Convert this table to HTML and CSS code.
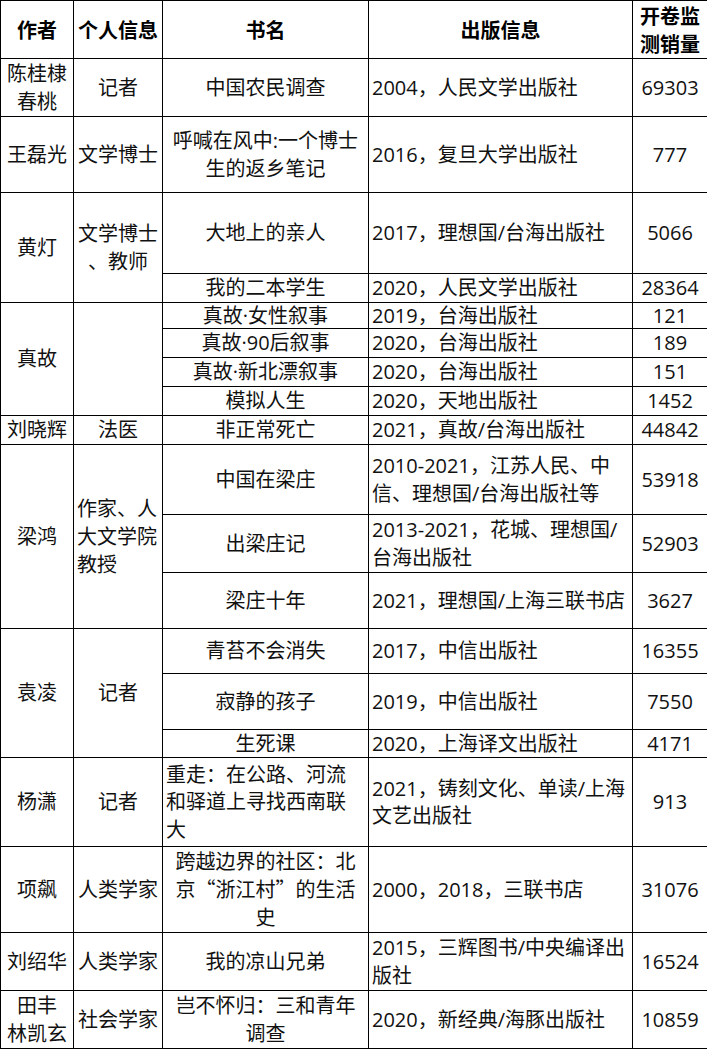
FILE: index.html
```html
<!DOCTYPE html>
<html lang="zh-CN">
<head>
<meta charset="utf-8">
<title>非虚构作品销量</title>
<link rel="stylesheet" href="styles.css">
</head>
<body>
<table class="books">
  <colgroup>
    <col class="c-author">
    <col class="c-info">
    <col class="c-title">
    <col class="c-pub">
    <col class="c-sales">
  </colgroup>
  <thead>
    <tr class="r58">
      <th>作者</th>
      <th>个人信息</th>
      <th>书名</th>
      <th>出版信息</th>
      <th>开卷监<br>测销量</th>
    </tr>
  </thead>
  <tbody>
    <tr class="r58">
      <td>陈桂棣<br>春桃</td>
      <td>记者</td>
      <td>中国农民调查</td>
      <td class="pub">2004，人民文学出版社</td>
      <td>69303</td>
    </tr>
    <tr class="r76">
      <td>王磊光</td>
      <td>文学博士</td>
      <td>呼喊在风中:一个博士<br>生的返乡笔记</td>
      <td class="pub">2016，复旦大学出版社</td>
      <td>777</td>
    </tr>
    <tr class="r81">
      <td rowspan="2">黄灯</td>
      <td rowspan="2">文学博士<br>、教师</td>
      <td>大地上的亲人</td>
      <td class="pub">2017，理想国/台海出版社</td>
      <td>5066</td>
    </tr>
    <tr class="r29">
      <td>我的二本学生</td>
      <td class="pub">2020，人民文学出版社</td>
      <td>28364</td>
    </tr>
    <tr class="r26">
      <td rowspan="4">真故</td>
      <td rowspan="4"></td>
      <td>真故·女性叙事</td>
      <td class="pub">2019，台海出版社</td>
      <td>121</td>
    </tr>
    <tr class="r29">
      <td>真故·90后叙事</td>
      <td class="pub">2020，台海出版社</td>
      <td>189</td>
    </tr>
    <tr class="r29">
      <td>真故·新北漂叙事</td>
      <td class="pub">2020，台海出版社</td>
      <td>151</td>
    </tr>
    <tr class="r29">
      <td>模拟人生</td>
      <td class="pub">2020，天地出版社</td>
      <td>1452</td>
    </tr>
    <tr class="r29">
      <td>刘晓辉</td>
      <td>法医</td>
      <td>非正常死亡</td>
      <td class="pub">2021，真故/台海出版社</td>
      <td>44842</td>
    </tr>
    <tr class="r70">
      <td rowspan="3">梁鸿</td>
      <td rowspan="3" class="left">作家、人<br>大文学院<br>教授</td>
      <td>中国在梁庄</td>
      <td class="pub">2010-2021，江苏人民、中<br>信、理想国/台海出版社等</td>
      <td>53918</td>
    </tr>
    <tr class="r58">
      <td>出梁庄记</td>
      <td class="pub">2013-2021，花城、理想国/<br>台海出版社</td>
      <td>52903</td>
    </tr>
    <tr class="r56">
      <td>梁庄十年</td>
      <td class="pub">2021，理想国/上海三联书店</td>
      <td>3627</td>
    </tr>
    <tr class="r45">
      <td rowspan="3">袁凌</td>
      <td rowspan="3">记者</td>
      <td>青苔不会消失</td>
      <td class="pub">2017，中信出版社</td>
      <td>16355</td>
    </tr>
    <tr class="r56">
      <td>寂静的孩子</td>
      <td class="pub">2019，中信出版社</td>
      <td>7550</td>
    </tr>
    <tr class="r28">
      <td>生死课</td>
      <td class="pub">2020，上海译文出版社</td>
      <td>4171</td>
    </tr>
    <tr class="r89">
      <td>杨潇</td>
      <td>记者</td>
      <td class="left">重走：在公路、河流<br>和驿道上寻找西南联<br>大</td>
      <td class="pub">2021，铸刻文化、单读/上海<br>文艺出版社</td>
      <td>913</td>
    </tr>
    <tr class="r86">
      <td>项飙</td>
      <td>人类学家</td>
      <td>跨越边界的社区：北<br>京<span class="cjk">“</span>浙江村<span class="cjk">”</span>的生活<br>史</td>
      <td class="pub">2000，2018，三联书店</td>
      <td>31076</td>
    </tr>
    <tr class="r58">
      <td>刘绍华</td>
      <td>人类学家</td>
      <td>我的凉山兄弟</td>
      <td class="pub">2015，三辉图书/中央编译出<br>版社</td>
      <td>16524</td>
    </tr>
    <tr class="r58">
      <td>田丰<br>林凯玄</td>
      <td>社会学家</td>
      <td>岂不怀归：三和青年<br>调查</td>
      <td class="pub">2020，新经典/海豚出版社</td>
      <td>10859</td>
    </tr>
  </tbody>
</table>
</body>
</html>
```
FILE: styles.css
```css
html, body {
  margin: 0;
  padding: 0;
  background: #ffffff;
}

.books {
  border-collapse: collapse;
  table-layout: fixed;
  width: 707px;
  font-family: "Open Sans", "Noto Sans CJK SC", sans-serif;
  font-size: 20px;
  line-height: 28px;
  color: #111111;
}

.c-author { width: 73px; }
.c-info { width: 89px; }
.c-title { width: 206px; }
.c-pub { width: 264px; }
.c-sales { width: 75px; }

.books th,
.books td {
  border: 1px solid #000000;
  padding: 0 3px;
  text-align: center;
  vertical-align: middle;
  white-space: nowrap;
  overflow: hidden;
}

.books th {
  font-family: "Noto Sans CJK SC", sans-serif;
  font-weight: 700;
  color: #000000;
}

.books td.pub,
.books td.left {
  text-align: left;
}

.cjk {
  font-family: "Noto Sans CJK SC", sans-serif;
}

.r26 { height: 26px; }
.r28 { height: 28px; }
.r29 { height: 29px; }
.r45 { height: 45px; }
.r56 { height: 56px; }
.r58 { height: 58px; }
.r70 { height: 70px; }
.r76 { height: 76px; }
.r81 { height: 81px; }
.r86 { height: 86px; }
.r89 { height: 89px; }

.r26 > td,
.r28 > td,
.r29 > td {
  line-height: 22px;
}

.r86 > td,
.r89 > td {
  line-height: 27.5px;
}
```
